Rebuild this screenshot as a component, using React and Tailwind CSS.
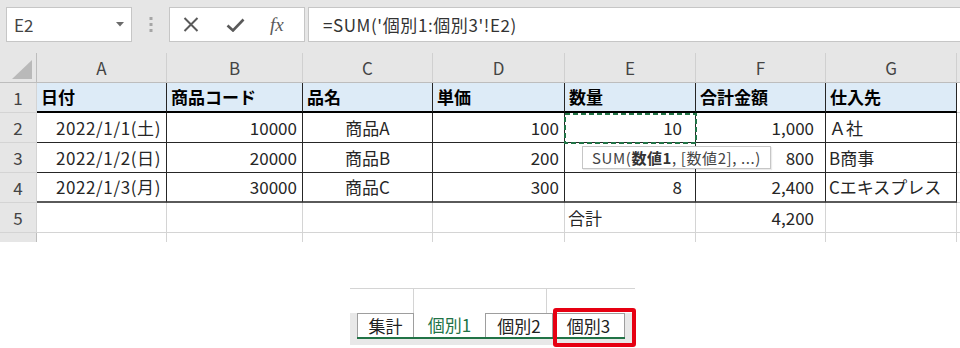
import React from 'react'

const font = "font-[family-name:'Noto_Sans_CJK_JP','Noto_Sans',sans-serif]"

const letters = ['A', 'B', 'C', 'D', 'E', 'F', 'G']

const header = ['日付', '商品コード', '品名', '単価', '数量', '合計金額', '仕入先']

// align: d = date, r = right, c = center, l = left
const rows = [
  [
    ['2022/1/1(土)', 'd'], ['10000', 'r'], ['商品A', 'c'], ['100', 'r'], ['10', 'r2'], ['1,000', 'r3'], ['Ａ社', 'l'],
  ],
  [
    ['2022/1/2(日)', 'd'], ['20000', 'r'], ['商品B', 'c'], ['200', 'r'], ['', 'r2'], ['800', 'r3'], ['B商事', 'l'],
  ],
  [
    ['2022/1/3(月)', 'd'], ['30000', 'r'], ['商品C', 'c'], ['300', 'r'], ['8', 'r2'], ['2,400', 'r3'], ['Cエキスプレス', 'l'],
  ],
]

const alignCls = {
  d: 'justify-end pr-[5px] tracking-[0.6px]',
  r: 'justify-end pr-[5px]',
  r2: 'justify-end pr-[13px]',
  r3: 'justify-end pr-[11px]',
  c: 'justify-center',
  l: 'justify-start pl-[3px]',
}

function RowHead({ n }) {
  return (
    <div className="h-[30px] bg-[#e6e6e6] border-r border-[#bdbdbd] border-b border-[#d4d4d4] flex items-center justify-center text-[17px] text-[#444]">
      {n}
    </div>
  )
}

export default function App() {
  return (
    <div className={`w-[960px] h-[348px] overflow-hidden bg-white relative ${font}`}>
      {/* formula bar */}
      <div className="h-[53px] bg-[#e6e6e6] flex items-start pt-[7px]">
        <div className="ml-[6px] w-[126px] h-[35px] bg-white border border-[#c6c6c6] flex items-center justify-between pl-[7px] pr-[7px]">
          <span className="text-[17px] text-[#444] leading-none">E2</span>
          <svg width="8" height="5" viewBox="0 0 8 5">
            <path d="M0 0h8L4 4.5z" fill="#6b6b6b" />
          </svg>
        </div>
        <div className="w-[37px] h-[35px] flex items-center justify-center">
          <svg width="4" height="15" viewBox="0 0 4 15">
            <rect x="0.5" y="0" width="3" height="3" fill="#a6a6a6" />
            <rect x="0.5" y="6" width="3" height="3" fill="#a6a6a6" />
            <rect x="0.5" y="12" width="3" height="3" fill="#a6a6a6" />
          </svg>
        </div>
        <div className="w-[136px] h-[35px] bg-white border border-[#c6c6c6] flex items-center pl-[13px]">
          <svg width="16" height="15" viewBox="0 0 16 15">
            <path d="M1.5 1 14.5 14M14.5 1 1.5 14" stroke="#5a5a5a" strokeWidth="2" />
          </svg>
          <svg className="ml-[27px]" width="19" height="14" viewBox="0 0 19 14">
            <path d="M1.5 7.5 7 12.5 17.5 1.5" stroke="#5a5a5a" strokeWidth="2.6" fill="none" />
          </svg>
          <span className="ml-[25px] font-[family-name:'Liberation_Serif',serif] italic text-[19px] text-[#5a5a5a] leading-none">
            fx
          </span>
        </div>
        <div className="ml-[3px] flex-1 h-[35px] bg-white border border-r-0 border-[#c6c6c6] flex items-center pl-[14px]">
          <span className="text-[17px] text-[#333] leading-none tracking-[0.6px]">=SUM('個別1:個別3'!E2)</span>
        </div>
      </div>

      {/* sheet grid */}
      <div className="relative grid grid-cols-[37px_130px_136px_130px_132px_131px_130px_131px_3px]">
        {/* column letters */}
        <div className="h-[30px] bg-[#e6e6e6] border-r border-b border-[#bdbdbd] relative">
          <svg className="absolute left-[12px] top-[7px]" width="20" height="19" viewBox="0 0 20 19">
            <path d="M20 0V19H0z" fill="#b9b9b9" />
          </svg>
        </div>
        {letters.map((l) => (
          <div
            key={l}
            className="h-[30px] bg-[#e6e6e6] border-r border-b border-[#bdbdbd] border-r-[#d0d0d0] flex items-center justify-center text-[17px] text-[#444]"
          >
            {l}
          </div>
        ))}
        <div className="h-[30px] bg-[#e6e6e6] border-b border-[#bdbdbd]" />

        {/* row 1 */}
        <RowHead n="1" />
        {header.map((h) => (
          <div
            key={h}
            className="h-[30px] bg-[#ddebf7] border-r border-[#262626] border-b-2 border-b-black flex items-center pl-[4px] text-[17px] font-bold text-black"
          >
            {h}
          </div>
        ))}
        <div className="h-[30px] border-b border-[#d4d4d4]" />

        {/* rows 2-4 */}
        {rows.map((r, i) => (
          <React.Fragment key={i}>
            <RowHead n={String(i + 2)} />
            {r.map(([v, a], j) => (
              <div
                key={j}
                className={`h-[30px] flex items-center text-[17px] text-[#262626] border-r border-[#262626] ${
                  i === 2 ? 'border-b-2 border-b-[#5a5a5a]' : 'border-b border-b-[#262626]'
                } ${alignCls[a]}`}
              >
                {v}
              </div>
            ))}
            <div className="h-[30px] border-b border-[#d4d4d4]" />
          </React.Fragment>
        ))}

        {/* row 5 */}
        <RowHead n="5" />
        {['', '', '', '', '合計', '4,200', ''].map((v, j) => (
          <div
            key={j}
            className={`h-[30px] flex items-center text-[17px] text-[#262626] border-r border-b border-[#d4d4d4] ${
              j === 5 ? 'justify-end pr-[11px]' : 'pl-[3px]'
            }`}
          >
            {v}
          </div>
        ))}
        <div className="h-[30px] border-b border-[#d4d4d4]" />

        {/* row 6, cut by the bottom of the sheet view */}
        <div className="h-[9px] bg-[#e6e6e6] border-r border-[#bdbdbd]" />
        {letters.map((l) => (
          <div key={l} className="h-[9px] border-r border-[#d4d4d4]" />
        ))}
        <div className="h-[9px]" />

        {/* copy marquee on E2 */}
        <svg className="absolute left-[564px] top-[60px]" width="133" height="31" viewBox="0 0 133 31">
          <rect x="1" y="1" width="131" height="29" fill="none" stroke="#217346" strokeWidth="2" strokeDasharray="5 3" />
        </svg>

        {/* function tooltip */}
        <div className="absolute left-[582px] top-[93px] h-[23px] px-[9px] bg-white border border-[#c6c6c6] shadow-[1px_1px_1px_rgba(0,0,0,0.08)] flex items-center text-[15px] text-[#444] leading-none whitespace-nowrap tracking-[0.6px]">
          SUM(<b className="text-[#333]">数値1</b>, [数値2], ...)
        </div>
      </div>

      {/* sheet tabs snippet */}
      <div className="ml-[350px] mt-[46px] w-[290px]">
        <div className="h-[25px] w-[285px] border-t border-[#d4d4d4] flex">
          <div className="w-[64px] border-r border-[#d4d4d4]" />
          <div className="w-[133px] border-r border-[#d4d4d4]" />
        </div>
        <div className="h-[32px] w-[282px] bg-[#e8e8e8] pl-[7px]">
          <div className="flex h-[26px] border-b-2 border-[#217346] w-[268px]">
            <div className="w-[57px] bg-white border-t border-l border-r border-[#9e9e9e] flex items-center justify-center text-[17px] text-[#222]">
              集計
            </div>
            <div className="w-[71px] bg-white flex items-center justify-center text-[17px] text-[#217346]">
              個別1
            </div>
            <div className="w-[68px] bg-white border-t border-l border-r border-[#9e9e9e] flex items-center justify-center text-[17px] text-[#222]">
              個別2
            </div>
            <div className="w-[72px] bg-white border-t border-r border-[#9e9e9e] flex items-center justify-center text-[17px] text-[#222]">
              個別3
            </div>
          </div>
        </div>
      </div>

      {/* highlight box */}
      <div className="absolute left-[553px] top-[308px] w-[83px] h-[39px] border-4 border-[#e60012] rounded-[3px]" />
    </div>
  )
}
